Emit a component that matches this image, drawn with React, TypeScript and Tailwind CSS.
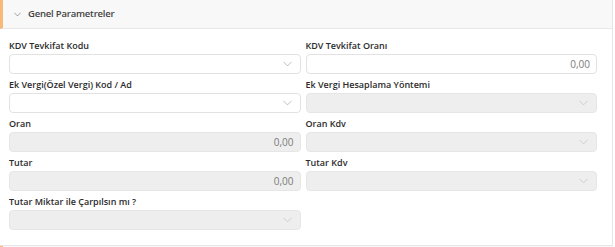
import React from 'react';

const Chevron: React.FC<{ className?: string }> = ({ className }) => (
  <svg viewBox="0 0 12 8" fill="none" className={className}>
    <path d="M1 1.5L6 6.5L11 1.5" stroke="currentColor" strokeWidth="1" strokeLinecap="round" strokeLinejoin="round" />
  </svg>
);

type FieldProps = { label: string; kind: 'select' | 'number'; disabled?: boolean };

const Field: React.FC<FieldProps> = ({ label, kind, disabled }) => (
  <div className="flex flex-col">
    <label className="h-[19px] flex items-center pt-[3px] text-[9px] font-semibold text-[#2b2b2b]">{label}</label>
    <div
      className={`h-[20px] rounded-[4px] border flex items-center justify-end px-[6px] ${
        disabled ? 'bg-[#eeeeee] border-[#e6e6e6]' : 'bg-white border-[#e2e2e2]'
      }`}
    >
      {kind === 'number' ? (
        <span className="text-[10px] text-[#7a7a7a]">0,00</span>
      ) : (
        <Chevron className={`w-[9px] h-[6px] mr-[2px] ${disabled ? 'text-[#c4c4c4]' : 'text-[#a8a8a8]'}`} />
      )}
    </div>
  </div>
);

const App: React.FC = () => {
  return (
    <div className="w-[615px] h-[247px] bg-white overflow-hidden" style={{ fontFamily: '"Open Sans", "Noto Sans", sans-serif' }}>
      <div className="w-[613px] border-r border-b border-[#e6e6e6]">
        <div className="h-[29px] flex items-center bg-[#f8f8f8] border-b border-[#e8e8e8] border-l-[3px] border-l-[#f7b878]">
          <Chevron className="w-[7px] h-[5px] ml-[11px] text-[#666]" />
          <span className="ml-[7px] text-[9.5px] tracking-[-0.2px] font-semibold text-[#444]">Genel Parametreler</span>
        </div>
        <div className="grid grid-cols-2 gap-x-[5px] pl-[9px] pr-[15px] pt-[6px] pb-[15px] gap-y-0">
          <Field label="KDV Tevkifat Kodu" kind="select" />
          <Field label="KDV Tevkifat Oranı" kind="number" />
          <Field label="Ek Vergi(Özel Vergi) Kod / Ad" kind="select" />
          <Field label="Ek Vergi Hesaplama Yöntemi" kind="select" disabled />
          <Field label="Oran" kind="number" disabled />
          <Field label="Oran Kdv" kind="select" disabled />
          <Field label="Tutar" kind="number" disabled />
          <Field label="Tutar Kdv" kind="select" disabled />
          <Field label="Tutar Miktar ile Çarpılsın mı ?" kind="select" disabled />
        </div>
      </div>
      <div className="h-[4px] border-l-[3px] border-l-[#f7b878] bg-[#f8f8f8]" />
    </div>
  );
};

export default App;
